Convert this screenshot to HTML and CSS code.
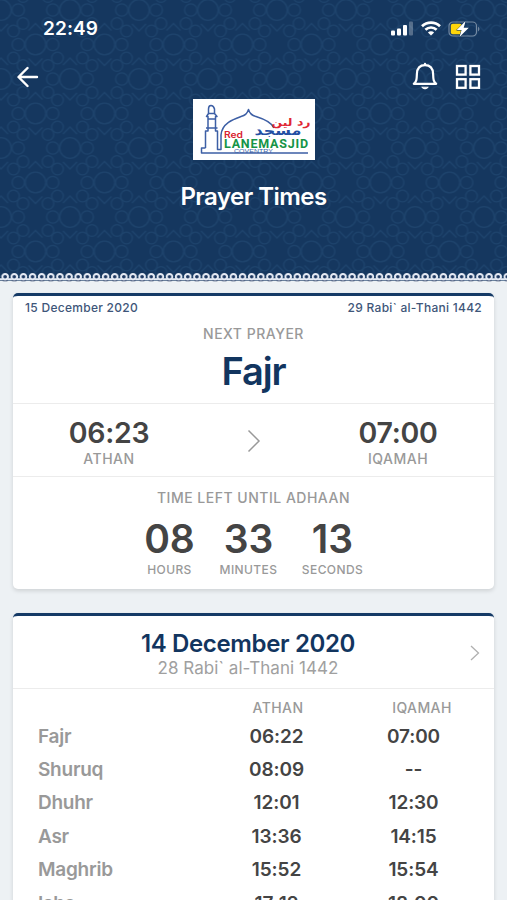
FILE: index.html
```html
<!DOCTYPE html>
<html lang="en">
<head>
  <meta charset="UTF-8">
  <meta name="viewport" content="width=device-width, initial-scale=1.0">
  <title>Prayer Times</title>
  <link rel="stylesheet" href="styles.css">
</head>
<body>
  <header class="header">
    <svg class="header-pattern" width="507" height="282">
      <defs>
        <g id="rosette">
          <circle r="10.3"/>
          <circle cx="17.2" r="6.2"/>
          <circle cx="-17.2" r="6.2"/>
          <circle cx="12.500" cy="21" r="5.800"/>
          <circle cx="-12.500" cy="21" r="5.800"/>
          <circle cx="12.500" cy="-21" r="5.800"/>
          <circle cx="-12.500" cy="-21" r="5.800"/>
          <path d="M-7 14L0 21L7 14M-7 -14L0 -21L7 -14"/>
        </g>
        <pattern id="tiles" x="35.500" y="10" width="69" height="69" patternUnits="userSpaceOnUse">
          <g class="tile-lines">
            <use href="#rosette" x="34.5" y="0"/>
            <use href="#rosette" x="34.5" y="69"/>
            <use href="#rosette" x="0" y="34.5"/>
            <use href="#rosette" x="69" y="34.5"/>
          </g>
        </pattern>
        <pattern id="lace" x="0.6" y="272" width="9.13" height="10" patternUnits="userSpaceOnUse">
          <path class="lace-fill" d="M0 8.800H9.13V10H0Z"/>
          <path class="lace-base" d="M2.400 8.600H6.800"/>
          <circle class="lace-ring" cx="4.56" cy="4.800" r="2.800"/>
          <path class="lace-ring" d="M0 7.200H2.400M6.800 7.200H9.2"/>
        </pattern>
      </defs>
      <rect width="507" height="281" fill="url(#tiles)"/>
      <rect y="272" width="507" height="10" fill="url(#lace)"/>
    </svg>

    <div class="status-bar">
      <span class="clock">22:49</span>
      <div class="status-icons">
        <svg width="23" height="15" viewBox="0 0 23 15">
          <rect x="0" y="9.5" width="4" height="5" rx="1" fill="#fff"/>
          <rect x="6" y="7.5" width="4" height="7" rx="1" fill="#fff"/>
          <rect x="12" y="4" width="4" height="10.5" rx="1" fill="#fff"/>
          <rect x="18" y="0.5" width="4" height="14" rx="1" fill="#fff" opacity="0.28"/>
        </svg>
        <svg width="20" height="15" viewBox="0 0 20 15" fill="none" stroke="#fff" stroke-width="2.7">
          <path d="M1 5.2A13 13 0 0 1 19 5.2"/>
          <path d="M4.4 8.8A8 8 0 0 1 15.6 8.8"/>
          <path d="M10 14.6L6.9 11.5A4.4 4.4 0 0 1 13.1 11.5Z" fill="#fff" stroke="none"/>
        </svg>
        <svg width="33" height="18" viewBox="0 0 33 18">
          <rect x="1" y="2" width="27.5" height="14" rx="4" fill="none" stroke="#fff" stroke-opacity="0.4" stroke-width="1.2"/>
          <path d="M30 6.5Q33 9 30 11.5Z" fill="#fff" opacity="0.4"/>
          <rect x="2.8" y="3.8" width="11" height="10.5" rx="2" fill="#ffd60a"/>
          <path d="M17.6 1L8.7 10.1H13.6L11.5 17L20.8 7.8H15.7Z" fill="#fff" stroke="#15375f" stroke-width="1" paint-order="stroke"/>
        </svg>
      </div>
    </div>

    <nav class="nav">
      <svg width="22" height="22" viewBox="0 0 22 22" fill="none" stroke="#fff" stroke-width="2.4" stroke-linecap="round" stroke-linejoin="round">
        <path d="M20 11H2M10.5 2L1.5 11L10.5 20"/>
      </svg>
      <div class="nav-actions">
        <svg width="26" height="30" viewBox="0 0 26 30" fill="none" stroke="#fff" stroke-width="2.2" stroke-linecap="round" stroke-linejoin="round">
          <path d="M1.8 21.8H24.2C21.4 19.5 21.3 17.5 21.1 12C20.9 6.5 18 3.2 13 3.2S5.1 6.5 4.9 12C4.7 17.5 4.6 19.5 1.8 21.8Z"/>
          <path d="M10 25.5Q13 28.5 16 25.5Z" fill="#fff" stroke-width="1"/>
          <path d="M13 1.8V3"/>
        </svg>
        <svg width="26" height="26" viewBox="0 0 26 26" fill="none" stroke="#fff" stroke-width="2.3">
          <rect x="2" y="2" width="8.6" height="8.6"/>
          <rect x="15.4" y="2" width="8.6" height="8.6"/>
          <rect x="2" y="15.2" width="8.6" height="8.6"/>
          <rect x="15.4" y="15.2" width="8.6" height="8.6"/>
        </svg>
      </div>
    </nav>

    <div class="brand">
      <svg class="logo" width="122" height="61" viewBox="0 0 122 61">
        <rect width="122" height="61" fill="#fff"/>
        <g fill="none" stroke="#3d5fa5" stroke-width="1.5" stroke-linejoin="round">
          <path d="M12.5 49H8.500V54H115M12.500 49V32H15V17.5H13.5L15.5 14.5V10Q15.500 6.500 18 6.500T21.500 10V14.500L24 17.500H22.500V32H24.500V50.500H28V36C29 24 41 20 48 17.500Q54 16 55.500 10.500Q57 16 63 17.500C71 20 79 24 81 29"/>
          <path d="M15 20H22.500M13 29H24.500M15.500 14.500H21.500"/>
        </g>
        <text x="31" y="38.500" class="logo-red" textLength="19" lengthAdjust="spacingAndGlyphs">Red</text>
        <text x="31" y="48.500" class="logo-green" textLength="84">LANEMASJID</text>
        <text x="41" y="53.500" class="logo-city" textLength="39" lengthAdjust="spacingAndGlyphs">COVENTRY</text>
        <text x="98" y="26.500" class="logo-arabic-red" textLength="39" lengthAdjust="spacingAndGlyphs">رد لين</text>
        <text x="85" y="35.500" class="logo-arabic-blue" textLength="47" lengthAdjust="spacingAndGlyphs">مسجد</text>
      </svg>
      <h1>Prayer Times</h1>
    </div>
  </header>

  <main class="content">
    <section class="card next-prayer">
      <div class="dates">
        <span>15 December 2020</span>
        <span>29 Rabi` al-Thani 1442</span>
      </div>
      <div class="next-name">
        <p class="label">NEXT PRAYER</p>
        <h2>Fajr</h2>
      </div>
      <div class="next-times">
        <div class="time-block">
          <span class="big-time">06:23</span>
          <span class="label">ATHAN</span>
        </div>
        <svg width="14" height="24" viewBox="0 0 14 24" fill="none" stroke="#999" stroke-width="1.5">
          <path d="M1.5 1.5L12 12L1.5 22.5"/>
        </svg>
        <div class="time-block">
          <span class="big-time">07:00</span>
          <span class="label">IQAMAH</span>
        </div>
      </div>
      <div class="countdown">
        <p class="label">TIME LEFT UNTIL ADHAAN</p>
        <div class="counters">
          <div class="counter"><strong>08</strong><span>HOURS</span></div>
          <div class="counter"><strong>33</strong><span>MINUTES</span></div>
          <div class="counter"><strong>13</strong><span>SECONDS</span></div>
        </div>
      </div>
    </section>

    <section class="card timetable">
      <div class="day">
        <div class="day-text">
          <h3>14 December 2020</h3>
          <p>28 Rabi` al-Thani 1442</p>
        </div>
        <svg class="day-next" width="10" height="16" viewBox="0 0 10 16" fill="none" stroke="#b0b0b0" stroke-width="1.3">
          <path d="M1 1L8.5 8L1 15"/>
        </svg>
      </div>
      <div class="row row-head"><span></span><span>ATHAN</span><span>IQAMAH</span></div>
      <div class="row"><span class="name">Fajr</span><span>06:22</span><span>07:00</span></div>
      <div class="row"><span class="name">Shuruq</span><span>08:09</span><span>--</span></div>
      <div class="row"><span class="name">Dhuhr</span><span>12:01</span><span>12:30</span></div>
      <div class="row"><span class="name">Asr</span><span>13:36</span><span>14:15</span></div>
      <div class="row"><span class="name">Maghrib</span><span>15:52</span><span>15:54</span></div>
      <div class="row"><span class="name">Isha</span><span>17:12</span><span>18:00</span></div>
    </section>
  </main>
</body>
</html>
```

FILE: styles.css
```css
* {
  box-sizing: border-box;
}
body {
  margin: 0;
  height: 900px;
  overflow: hidden;
  background: #edf1f4;
  font-family: Inter, "Liberation Sans", sans-serif;
  color: #444;
}
h1, h2, h3, p {
  margin: 0;
}
svg {
  display: block;
}

/* Header */
.header {
  position: relative;
  height: 281px;
  background: #15375f;
  color: #fff;
}
.header-pattern {
  position: absolute;
  inset: 0;
}
.tile-lines {
  fill: none;
  stroke: #2a5580;
  stroke-width: 1.3;
  opacity: 0.4;
}
.lace-fill {
  fill: #edf1f4;
}
.lace-base {
  stroke: #33466d;
  stroke-width: 1.4;
}
.lace-ring {
  fill: #1d3861;
  stroke: #e6ebf5;
  stroke-width: 2;
}
.status-bar, .nav, .brand {
  position: relative;
}
.status-bar {
  display: flex;
  justify-content: space-between;
  align-items: center;
  height: 57px;
  padding: 0 26px 0 43px;
}
.clock {
  font-size: 19px;
  font-weight: 600;
  letter-spacing: 0.1px;
}
.status-icons {
  display: flex;
  align-items: center;
  gap: 7px;
}
.nav {
  display: flex;
  justify-content: space-between;
  align-items: center;
  height: 41px;
  padding: 0 26px 1px 17px;
}
.nav-actions {
  display: flex;
  align-items: center;
  gap: 17px;
}
.brand {
  display: flex;
  flex-direction: column;
  align-items: center;
  padding-top: 1px;
}
.logo-red {
  font: 600 9px Inter, sans-serif;
  fill: #d8232f;
}
.logo-green {
  font: 700 12.5px Roboto, sans-serif;
  fill: #159447;
}
.logo-city {
  font: 400 5.5px "Liberation Sans", sans-serif;
  fill: #3d5fa5;
}
.logo-arabic-red, .logo-arabic-blue {
  font-family: "DejaVu Sans", sans-serif;
  font-weight: 700;
  text-anchor: middle;
}
.logo-arabic-red {
  font-size: 11px;
  fill: #e02734;
}
.logo-arabic-blue {
  font-size: 13px;
  fill: #244fa3;
}
h1 {
  margin-top: 22px;
  font-size: 24px;
  line-height: 30px;
  font-weight: 600;
  letter-spacing: -0.55px;
}

/* Cards */
.content {
  padding: 12px 13px 0;
}
.card {
  background: #fff;
  border-top: 3px solid #153a66;
  border-radius: 5px;
  box-shadow: 0 2px 4px rgba(0, 0, 0, 0.13);
}
.label {
  font-size: 14px;
  line-height: 18px;
  font-weight: 500;
  letter-spacing: 0.5px;
  color: #999;
}
.dates {
  display: flex;
  justify-content: space-between;
  padding: 4px 12px 0;
  font-size: 12px;
  line-height: 16px;
  font-weight: 500;
  letter-spacing: 0.28px;
  color: #3e5679;
}
.next-name {
  height: 88px;
  padding-top: 9px;
  text-align: center;
  border-bottom: 1px solid #ececec;
}
h2 {
  margin-top: 5px;
  font-size: 38px;
  line-height: 46px;
  font-weight: 600;
  letter-spacing: -1.1px;
  color: #12355f;
}
.next-times {
  display: flex;
  justify-content: space-between;
  align-items: center;
  height: 73px;
  padding: 2px 46px 0;
  border-bottom: 1px solid #ececec;
}
.time-block {
  display: flex;
  flex-direction: column;
  align-items: center;
  width: 100px;
}
.big-time {
  font-size: 28.5px;
  line-height: 35px;
  font-weight: 600;
  letter-spacing: -0.3px;
}
.countdown {
  height: 112px;
  padding-top: 12px;
  text-align: center;
}
.counters {
  display: grid;
  grid-template-columns: 79px 79px 89px;
  justify-content: center;
  margin-top: 8px;
}
.counter {
  display: flex;
  flex-direction: column;
  align-items: center;
}
.counter strong {
  font-size: 39px;
  line-height: 47px;
  font-weight: 600;
}
.counter span {
  font-size: 12px;
  line-height: 16px;
  font-weight: 500;
  letter-spacing: 0.4px;
  color: #999;
}

/* Timetable */
.timetable {
  margin-top: 24px;
}
.day {
  position: relative;
  height: 73px;
  padding-top: 14px;
  text-align: center;
  border-bottom: 1px solid #ececec;
  margin-bottom: 3px;
}
.day-text {
  margin-right: 11px;
}
.day-next {
  position: absolute;
  top: 29px;
  right: 14px;
}
h3 {
  font-size: 24px;
  line-height: 28px;
  font-weight: 600;
  letter-spacing: -0.35px;
  color: #12355f;
}
.day p {
  margin-top: -1px;
  font-size: 17px;
  line-height: 22px;
  letter-spacing: 0.05px;
  color: #a0a0a0;
}
.row {
  display: grid;
  grid-template-columns: 170px 137px 137px;
  align-items: center;
  height: 33.4px;
  padding-left: 25px;
  font-size: 19px;
  font-weight: 600;
  letter-spacing: -0.1px;
  text-align: center;
}
.name {
  text-align: left;
  letter-spacing: -0.25px;
  color: #999;
}
.row-head {
  height: 27.4px;
  padding-top: 4px;
  font-size: 14px;
  font-weight: 500;
  letter-spacing: 0.4px;
  color: #999;
}
.row-head span:nth-child(2) {
  padding-left: 3px;
}
.row-head span:last-child {
  padding-left: 17px;
}
```
